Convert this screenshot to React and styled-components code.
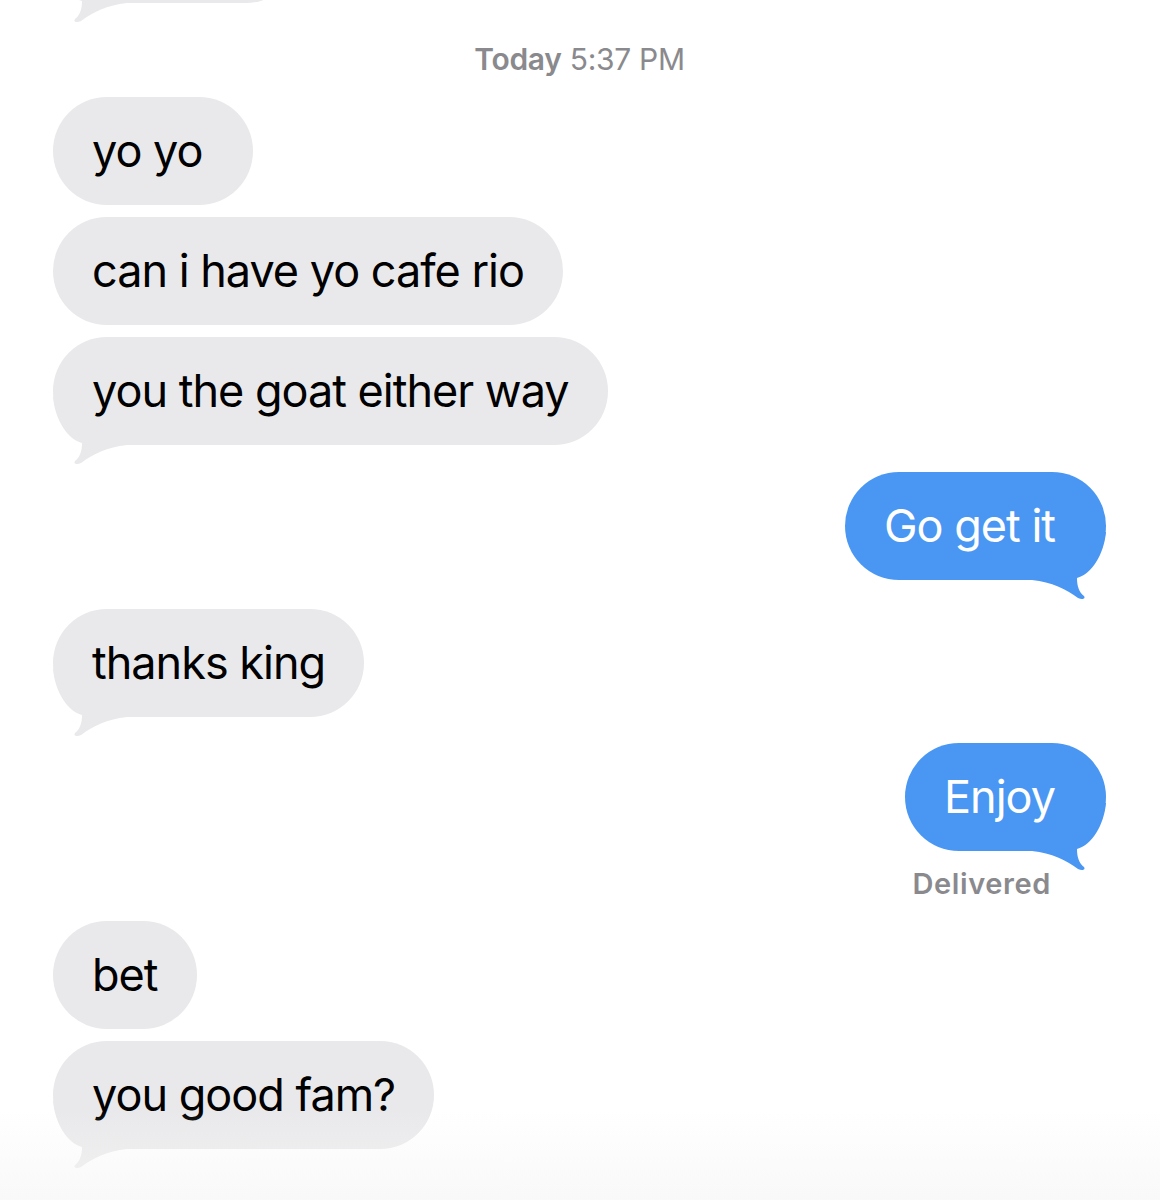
import { createGlobalStyle, styled } from "styled-components"

const GlobalStyle = createGlobalStyle`
    html, body {
        margin: 0;
        padding: 0;
        background: #ffffff;
        overflow: hidden;
    }
    body {
        font-family: Inter, "Noto Sans", "Liberation Sans", sans-serif;
        -webkit-font-smoothing: antialiased;
    }
`

const messages = [
    { id: 1, text: "yo yo ", gap: 20 },
    { id: 2, text: "can i have yo cafe rio", gap: 12 },
    { id: 3, text: "you the goat either way", gap: 12, tail: true },
    { id: 4, text: "Go get it", gap: 27, sent: true, tail: true },
    { id: 5, text: "thanks king", gap: 29, tail: true },
    { id: 6, text: "Enjoy", gap: 26, sent: true, tail: true, status: "Delivered" },
    { id: 7, text: "bet", gap: 20 },
    { id: 8, text: "you good fam?", gap: 12, tail: true },
]

const Tail = ({ sent }) => (
    <TailSvg $sent={sent} width="90" height="70" viewBox="0 -50 90 70">
        <path d="M0 -48 C2 -26 14 -6 29 -2 C29 6 27 12 22 16 C20 19 24 20 28 18 C40 9 54 2 74 0 L74 -48 Z" />
    </TailSvg>
)

const Message = ({ text, sent, tail, gap, width }) => (
    <Row $sent={sent} $gap={gap}>
        <Bubble $sent={sent} $width={width}>
            {text}
            {tail && <Tail sent={sent} />}
        </Bubble>
    </Row>
)

const App = () => {
    return (<Page>
        <GlobalStyle />
        <Thread>
            <Row $gap={-105}>
                <Bubble $width={247}>
                    <Tail />
                </Bubble>
            </Row>
            <Timestamp><b>Today</b> 5:37 PM</Timestamp>
            {messages.map((m) => (
                <Group key={m.id}>
                    <Message {...m} />
                    {m.status && <Status>{m.status}</Status>}
                </Group>
            ))}
        </Thread>
        <BottomFade />
    </Page>)
}

const Page = styled.div`
    position: relative;
    width: 1160px;
    height: 1200px;
    overflow: hidden;
    background: #ffffff;
`

const Thread = styled.div`
    display: flex;
    flex-direction: column;
    padding: 0 54px 0 53px;
`

const Group = styled.div`
    display: flex;
    flex-direction: column;
`

const Row = styled.div`
    display: flex;
    justify-content: ${(p) => (p.$sent ? "flex-end" : "flex-start")};
    margin-top: ${(p) => p.$gap || 0}px;
`

const Bubble = styled.div`
    position: relative;
    isolation: isolate;
    box-sizing: border-box;
    min-height: 108px;
    ${(p) => (p.$width ? `width: ${p.$width}px;` : "")}
    padding: ${(p) => (p.$sent ? "21px 51px 21px 39px" : "21px 39px")};
    border-radius: 54px;
    background: ${(p) => (p.$sent ? "#4a97f3" : "#e9e9eb")};
    color: ${(p) => (p.$sent ? "#ffffff" : "#000000")};
    fill: ${(p) => (p.$sent ? "#4a97f3" : "#e9e9eb")};
    font-size: 45px;
    line-height: 66px;
    letter-spacing: -1px;
    white-space: pre;
`

const TailSvg = styled.svg`
    position: absolute;
    z-index: -1;
    bottom: -20px;
    ${(p) => (p.$sent ? "right: 0; transform: scaleX(-1);" : "left: 0;")}
    pointer-events: none;
`

const Timestamp = styled.div`
    margin-top: 38px;
    text-align: center;
    font-size: 30px;
    line-height: 36px;
    color: #8a8a8e;
    letter-spacing: -0.3px;
    b {
        font-weight: 600;
    }
`

const Status = styled.div`
    align-self: flex-end;
    margin: 16px 55px 0 0;
    font-size: 29px;
    line-height: 34px;
    font-weight: 600;
    letter-spacing: 0.6px;
    color: #8a8a8e;
`

const BottomFade = styled.div`
    position: absolute;
    left: 0;
    right: 0;
    bottom: 0;
    height: 90px;
    background: linear-gradient(to bottom, rgba(246, 246, 246, 0), rgba(246, 246, 246, 0.7));
    pointer-events: none;
`

export default App
